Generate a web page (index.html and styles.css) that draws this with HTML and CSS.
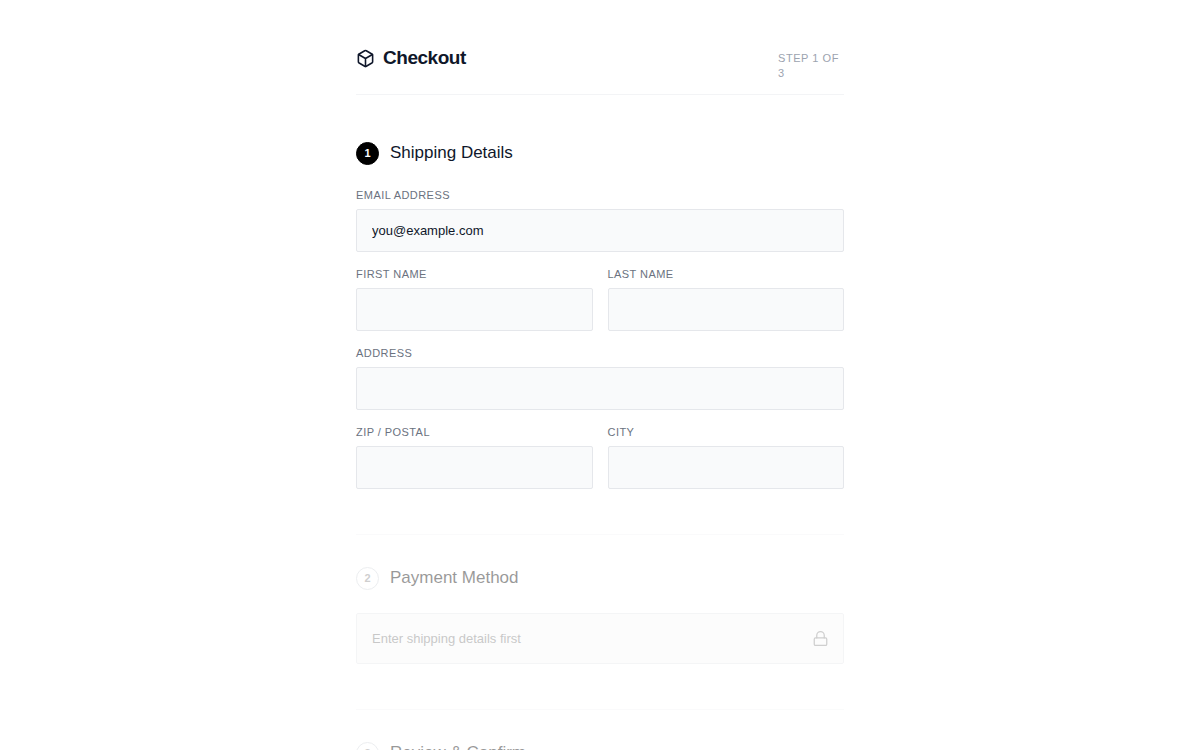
FILE: index.html
```html
<!DOCTYPE html>
<html lang="en">

<head>
    <title>Checkout</title>
    <meta charset="utf-8">
    <meta name="viewport" content="width=device-width, initial-scale=1.0">
    <link rel="stylesheet" href="styles.css">
</head>

<body>

<div class="checkout">

    <header class="top">
        <div class="brand">
            <svg class="box-icon" viewBox="0 0 24 24" aria-hidden="true">
                <path d="M21 16V8a2 2 0 0 0-1-1.73l-7-4a2 2 0 0 0-2 0l-7 4A2 2 0 0 0 3 8v8a2 2 0 0 0 1 1.73l7 4a2 2 0 0 0 2 0l7-4A2 2 0 0 0 21 16z"/>
                <path d="M3.27 6.96 12 12.01l8.73-5.05M12 22.08V12"/>
            </svg>
            <h1>Checkout</h1>
        </div>
        <p class="progress">STEP 1 OF 3</p>
    </header>

    <main>
        <form>
            <section class="step">
                <div class="step-title">
                    <span class="number active">1</span>
                    <h2>Shipping Details</h2>
                </div>

                <div class="fields">
                    <div class="field wide">
                        <label for="email">EMAIL ADDRESS</label>
                        <input type="email" id="email" value="you@example.com">
                    </div>
                    <div class="field">
                        <label for="first">FIRST NAME</label>
                        <input type="text" id="first">
                    </div>
                    <div class="field">
                        <label for="last">LAST NAME</label>
                        <input type="text" id="last">
                    </div>
                    <div class="field wide">
                        <label for="address">ADDRESS</label>
                        <input type="text" id="address">
                    </div>
                    <div class="field">
                        <label for="zip">ZIP / POSTAL</label>
                        <input type="text" id="zip">
                    </div>
                    <div class="field">
                        <label for="city">CITY</label>
                        <input type="text" id="city">
                    </div>
                </div>
            </section>

            <section class="step locked">
                <div class="step-title">
                    <span class="number">2</span>
                    <h2>Payment Method</h2>
                </div>
                <div class="locked-box">
                    <span>Enter shipping details first</span>
                    <svg class="lock-icon" viewBox="0 0 24 24" aria-hidden="true">
                        <rect x="2" y="11" width="20" height="12" rx="2"/>
                        <path d="M6 11V7a6 6 0 0 1 12 0v4"/>
                    </svg>
                </div>
            </section>

            <section class="step locked">
                <div class="step-title">
                    <span class="number">3</span>
                    <h2>Review &amp; Confirm</h2>
                </div>
            </section>
        </form>
    </main>

</div>

</body>

</html>
```
FILE: styles.css
```css
* {
    box-sizing: border-box;
}

body {
    margin: 0;
    background-color: #ffffff;
    color: #0f172a;
    font-family: "Liberation Sans", Arial, sans-serif;
    font-size: 13px;
}

h1, h2, p {
    margin: 0;
}

.checkout {
    max-width: 488px;
    margin: 0 auto;
    padding: 45px 0;
}

.top {
    display: flex;
    justify-content: space-between;
    align-items: flex-start;
    padding-bottom: 13px;
    border-bottom: 1px solid #f3f4f6;
}

.brand {
    display: flex;
    align-items: center;
    gap: 8px;
}

.brand h1 {
    font-size: 19px;
    line-height: 26px;
    letter-spacing: -0.025em;
}

svg {
    fill: none;
    stroke: currentColor;
    stroke-width: 2;
    stroke-linecap: round;
    stroke-linejoin: round;
}

.box-icon {
    width: 19px;
    height: 19px;
}

.progress {
    width: 66px;
    padding-top: 6px;
    font-size: 11px;
    line-height: 15px;
    letter-spacing: 0.05em;
    color: #9ca3af;
}

.step {
    padding: 45px 0;
}

.step-title {
    display: flex;
    align-items: center;
    gap: 11px;
    margin-bottom: 22px;
}

.step-title h2 {
    font-size: 17px;
    line-height: 26px;
    font-weight: normal;
}

.number {
    display: flex;
    align-items: center;
    justify-content: center;
    width: 23px;
    height: 23px;
    border: 1px solid #d1d5db;
    border-radius: 50%;
    font-size: 11px;
    font-weight: bold;
    color: #888888;
}

.number.active {
    background-color: #000000;
    border-color: #000000;
    color: #ffffff;
}

.fields {
    display: grid;
    grid-template-columns: 1fr 1fr;
    gap: 15px;
}

.wide {
    grid-column: 1 / -1;
}

.field label {
    display: block;
    margin-bottom: 6px;
    font-size: 11px;
    line-height: 15px;
    letter-spacing: 0.04em;
    color: #6b7280;
}

.field input {
    display: block;
    width: 100%;
    height: 43px;
    padding: 0 15px;
    border: 1px solid #e5e7eb;
    border-radius: 2px;
    background-color: #f9fafb;
    color: #0f172a;
    font-family: inherit;
    font-size: 13px;
}

/* steps that are not open yet */
.locked {
    padding-top: 30px;
    border-top: 1px solid #f3f4f6;
    color: #000000;
    opacity: 0.4;
}

.locked-box {
    display: flex;
    align-items: center;
    justify-content: space-between;
    height: 51px;
    padding: 0 15px;
    border: 1px solid #e5e7eb;
    border-radius: 2px;
    background-color: #f9f9f9;
    color: #777777;
}

.lock-icon {
    width: 15px;
    height: 15px;
    color: #888888;
}
```
